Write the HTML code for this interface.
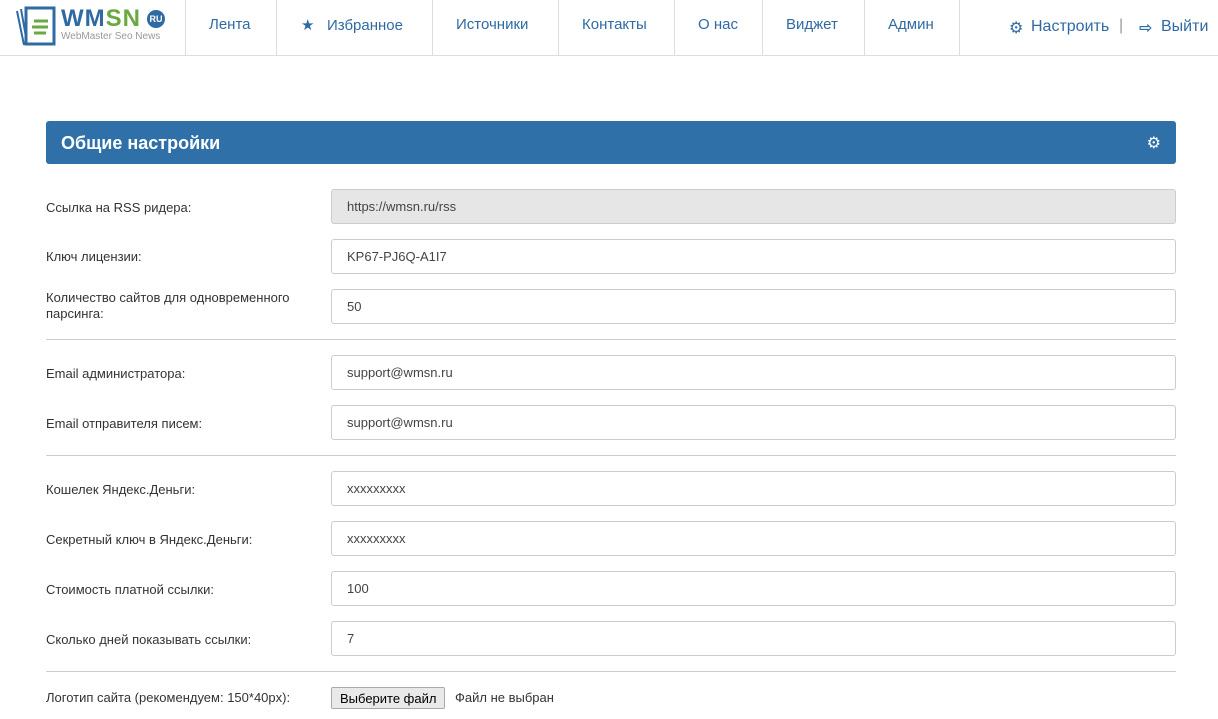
<!DOCTYPE html>
<html><head><meta charset="utf-8"><style>
*{box-sizing:border-box}
body{margin:0;width:1218px;height:719px;overflow:hidden;background:#fff;font-family:"Liberation Sans","DejaVu Sans",sans-serif;color:#333;font-size:13px}
.top{position:absolute;left:0;top:0;width:1218px;height:56px;border-bottom:1px solid #ddd}
.sep{position:absolute;top:0;width:1px;height:55px;background:#ddd}
.nav{position:absolute;top:16px;font-size:15px;color:#2f6aa3}
.bar{position:absolute;left:46px;top:121px;width:1130px;height:43px;background:#3070a9;border-radius:3px;color:#fff;font-weight:bold;font-size:18px;padding:12px 15px}
.lbl{position:absolute;left:46px;font-size:13px;line-height:16px;color:#333}
.inp{position:absolute;left:331px;width:845px;height:35px;border:1px solid #ccc;border-radius:3px;padding:9px 15px;font-size:13px;color:#444}
.hr{position:absolute;left:46px;width:1130px;height:1px;background:#ccc}
</style></head><body>
<div class="top">
<svg style="position:absolute;left:14px;top:5px" width="44" height="42" viewBox="0 0 44 42"><path d="M3 6 L10 40 M7 4 L13 38" stroke="#2f6aa3" stroke-width="2" fill="none"/><rect x="12" y="3" width="28" height="36" fill="#fff" stroke="#2f6aa3" stroke-width="3"/><path d="M20 16h14M18 22h16M20 28h12" stroke="#6aa842" stroke-width="3"/></svg>
<div style="position:absolute;left:61px;top:5px;font-weight:bold;font-size:24px;letter-spacing:1px"><span style="color:#2f6aa3">WM</span><span style="color:#6aa842">SN</span></div>
<div style="position:absolute;left:147px;top:10px;width:18px;height:18px;border-radius:9px;background:#2f6aa3;color:#fff;font-size:9px;font-weight:bold;text-align:center;line-height:18px">RU</div>
<div style="position:absolute;left:61px;top:31px;font-size:10px;color:#999">WebMaster Seo News</div>
<div class="sep" style="left:185px"></div><div class="sep" style="left:276px"></div><div class="sep" style="left:432px"></div><div class="sep" style="left:558px"></div><div class="sep" style="left:674px"></div><div class="sep" style="left:762px"></div><div class="sep" style="left:864px"></div><div class="sep" style="left:959px"></div>
<div class="nav" style="left:209px">Лента</div>
<div class="nav" style="left:301px">★&nbsp;&nbsp; Избранное</div>
<div class="nav" style="left:456px">Источники</div>
<div class="nav" style="left:582px">Контакты</div>
<div class="nav" style="left:698px">О нас</div>
<div class="nav" style="left:786px">Виджет</div>
<div class="nav" style="left:888px">Админ</div>
<div class="nav" style="left:1009px;top:18px;font-size:16px">⚙</div>
<div class="nav" style="left:1031px;top:18px;font-size:16px">Настроить</div>
<div class="nav" style="left:1119px;top:17px;font-size:16px;color:#999">|</div>
<div class="nav" style="left:1139px;top:18px;font-size:16px"><b>⇨</b></div>
<div class="nav" style="left:1161px;top:18px;font-size:16px">Выйти</div>
</div>
<div class="bar">Общие настройки<span style="float:right;font-size:16px">⚙</span></div>
<div class="lbl" style="top:200px">Ссылка на RSS ридера:</div>
<div class="inp" style="top:189px;background:#e6e6e6">https://wmsn.ru/rss</div>
<div class="lbl" style="top:249px">Ключ лицензии:</div>
<div class="inp" style="top:239px">KP67-PJ6Q-A1I7</div>
<div class="lbl" style="top:290px">Количество сайтов для одновременного<br>парсинга:</div>
<div class="inp" style="top:289px">50</div>
<div class="hr" style="top:339px"></div>
<div class="lbl" style="top:366px">Email администратора:</div>
<div class="inp" style="top:355px">support@wmsn.ru</div>
<div class="lbl" style="top:416px">Email отправителя писем:</div>
<div class="inp" style="top:405px">support@wmsn.ru</div>
<div class="hr" style="top:455px"></div>
<div class="lbl" style="top:482px">Кошелек Яндекс.Деньги:</div>
<div class="inp" style="top:471px">xxxxxxxxx</div>
<div class="lbl" style="top:532px">Секретный ключ в Яндекс.Деньги:</div>
<div class="inp" style="top:521px">xxxxxxxxx</div>
<div class="lbl" style="top:582px">Стоимость платной ссылки:</div>
<div class="inp" style="top:571px">100</div>
<div class="lbl" style="top:632px">Сколько дней показывать ссылки:</div>
<div class="inp" style="top:621px">7</div>
<div class="hr" style="top:671px"></div>
<div class="lbl" style="top:690px">Логотип сайта (рекомендуем: 150*40px):</div>
<div style="position:absolute;left:331px;top:687px;height:22px;padding:3px 8px;border:1px solid #aaa;background:#e9e9e9;border-radius:2px;font-size:13px;color:#000">Выберите файл</div>
<div style="position:absolute;left:455px;top:690px;font-size:13px">Файл не выбран</div>
</body></html>
